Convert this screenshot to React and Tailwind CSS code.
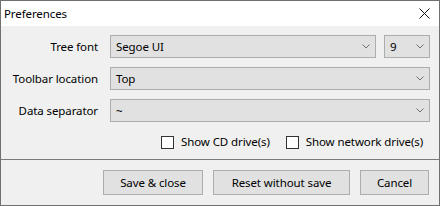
import React from 'react';

const font = { fontFamily: '"Noto Sans", "Open Sans", sans-serif' };
const txt = 'text-[11.5px] tracking-[-0.1px] text-black';

function Chevron() {
  return (
    <svg width="8" height="5" viewBox="0 0 8 5" className="shrink-0">
      <path d="M0.5 0.5 L4 4 L7.5 0.5" fill="none" stroke="#707070" strokeWidth="1" />
    </svg>
  );
}

function Combo({ value, className = '' }) {
  return (
    <div className={`h-[23px] flex items-center justify-between bg-[#e1e1e1] border border-[#adadad] pl-[5px] pr-[5px] ${className}`}>
      <span className={`${txt} leading-none`}>{value}</span>
      <Chevron />
    </div>
  );
}

function Row({ label, children }) {
  return (
    <div className="flex items-center">
      <div className={`w-[97px] text-right ${txt}`}>{label}</div>
      <div className="ml-[12px] flex">{children}</div>
    </div>
  );
}

function Check({ label }) {
  return (
    <label className={`flex items-center gap-[7px] h-[16px] ${txt}`}>
      <span className="w-[13px] h-[13px] bg-white border border-[#333333]" />
      {label}
    </label>
  );
}

function Button({ children, className = '' }) {
  return (
    <button className={`h-[25px] bg-[#e1e1e1] border border-[#adadad] ${txt} ${className}`}>
      {children}
    </button>
  );
}

export default function App() {
  return (
    <div style={font} className="w-[440px] h-[206px] border border-[#707070] bg-[#f0f0f0] flex flex-col">
      {/* title bar */}
      <div className="h-[25px] shrink-0 bg-white flex items-center justify-between pl-[3px] pr-[9px]">
        <span className={txt}>Preferences</span>
        <svg width="11" height="11" viewBox="0 0 11 11">
          <path d="M0.5 0.5 L10.5 10.5 M10.5 0.5 L0.5 10.5" stroke="#111" strokeWidth="1" />
        </svg>
      </div>

      {/* fields */}
      <div className="flex flex-col gap-[9px] pt-[9px]">
        <Row label="Tree font">
          <Combo value="Segoe UI" className="w-[266px]" />
          <Combo value="9" className="w-[46px] ml-[8px] pl-[4px]" />
        </Row>
        <Row label="Toolbar location">
          <Combo value="Top" className="w-[320px]" />
        </Row>
        <Row label="Data separator">
          <Combo value="~" className="w-[320px]" />
        </Row>
      </div>

      <div className="flex justify-end gap-[16px] pr-[16px] mt-[12px]">
        <Check label="Show CD drive(s)" />
        <Check label="Show network drive(s)" />
      </div>

      <div className="mt-[9px] border-t border-[#7a7a7a]" />

      <div className="flex justify-end gap-[10px] pr-[10px] mt-[10px]">
        <Button className="w-[100px]">Save &amp; close</Button>
        <Button className="w-[137px]">Reset without save</Button>
        <Button className="w-[69px]">Cancel</Button>
      </div>
    </div>
  );
}
